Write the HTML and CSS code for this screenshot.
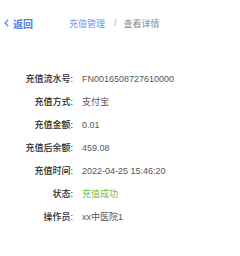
FILE: index.html
```html
<!DOCTYPE html>
<html>
<head>
<meta charset="utf-8">
<link rel="stylesheet" href="styles.css">
</head>
<body>
<div class="header">
  <a class="back"><svg class="chev" width="5" height="8" viewBox="0 0 5 8"><path d="M4.2 0.6 L1 4 L4.2 7.4" fill="none" stroke="#4d7fe8" stroke-width="1.2"/></svg>返回</a>
  <div class="crumbs">
    <span class="crumb-link">充值管理</span>
    <span class="sep">/</span>
    <span class="crumb-cur">查看详情</span>
  </div>
</div>
<div class="details">
  <div class="row"><span class="label">充值流水号:</span><span class="value">FN0016508727610000</span></div>
  <div class="row"><span class="label">充值方式:</span><span class="value">支付宝</span></div>
  <div class="row"><span class="label">充值金额:</span><span class="value">0.01</span></div>
  <div class="row"><span class="label">充值后余额:</span><span class="value">459.08</span></div>
  <div class="row"><span class="label">充值时间:</span><span class="value">2022-04-25 15:46:20</span></div>
  <div class="row"><span class="label">状态:</span><span class="value success">充值成功</span></div>
  <div class="row"><span class="label">操作员:</span><span class="value">xx中医院1</span></div>
</div>
</body>
</html>
```
FILE: styles.css
```css
* { box-sizing: border-box; }
body {
  margin: 0;
  background: #fff;
  font-family: "Liberation Sans", "Noto Sans CJK SC", sans-serif;
  width: 240px;
  height: 256px;
  overflow: hidden;
}
.header {
  display: flex;
  align-items: center;
  height: 46px;
  padding-left: 4px;
}
.back {
  display: flex;
  align-items: center;
  font-size: 10px;
  font-weight: 600;
  color: #4d7fe8;
  width: 65px;
}
.chev {
  margin-right: 4px;
}
.crumbs {
  display: flex;
  align-items: center;
  font-size: 9px;
}
.crumb-link { color: #6e93ee; }
.sep { color: #b0b0b0; margin: 0 7px 0 9px; }
.crumb-cur { color: #8a8a8a; }
.details {
  padding-top: 21px;
}
.row {
  display: flex;
  align-items: center;
  height: 23px;
  font-size: 9px;
}
.label {
  width: 73px;
  text-align: right;
  color: #2a2a2a;
  font-weight: 500;
}
.value {
  margin-left: 9px;
  color: #555;
}
.success { color: #67c23a; }
```
